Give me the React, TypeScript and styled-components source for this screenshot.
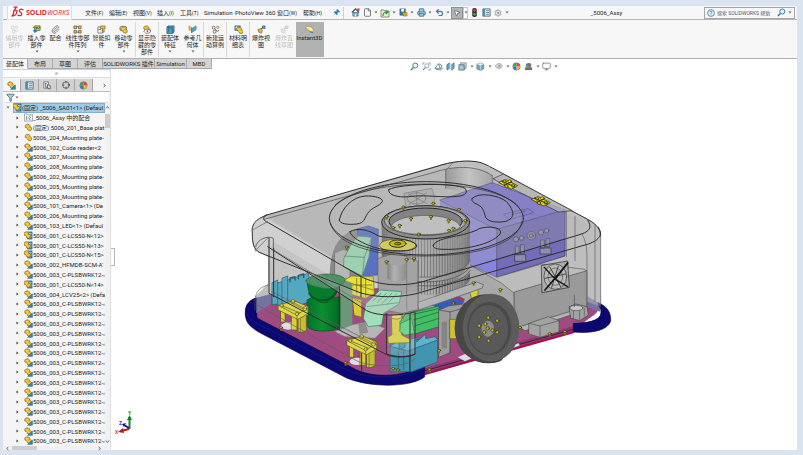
import React from "react";
import styled, { createGlobalStyle, css } from "styled-components";
import { Search, File, Printer, Undo2, MousePointer2, Settings, Filter, Crosshair, Pin, Eye, Monitor, Paperclip } from "lucide-react";

const Global = createGlobalStyle`
  * { box-sizing: border-box; }
  html, body { margin: 0; padding: 0; }
  body { background: #dae4f0; }
  body, button, input {
    font-family: Roboto, "Noto Sans CJK SC", sans-serif;
    font-size: 6px;
    color: #1c1c1c;
  }
  button { border: 0; padding: 0; margin: 0; background: none; }
  svg { display: block; flex: none; }
`;

const Desktop = styled.div`
  height: 100vh;
  padding: 6px 6px 5px 3px;
  background: #dae4f0;
`;
const Window = styled.div`
  height: 100%;
  display: flex;
  flex-direction: column;
  background: #fff;
`;
const TitleBar = styled.header`
  height: 14px;
  flex: none;
  display: flex;
  align-items: center;
  background: #f7f7f7;
  border-bottom: 1px solid #b4b4b4;
`;
const Logo = styled.div`
  width: 65px;
  height: 14px;
  margin-left: 4px;
  display: flex;
  align-items: center;
  gap: 2px;
  padding-left: 3px;
  background: #fff;
  border: 1px solid #dcdcdc;
  border-top: 0;
  color: #d8262c;
  font: 700 7px/13px "Open Sans", sans-serif;
`;
const Thin = styled.span`
  font-weight: 400;
  font-style: italic;
`;
const Menu = styled.nav`
  display: flex;
  align-items: center;
  padding-left: 13px;
`;
const MenuItem = styled.button<{ $w: number }>`
  width: ${(p) => p.$w}px;
  text-align: left;
  white-space: nowrap;
  line-height: 12px;
  small { font-size: 5px; }
`;
const QuickBar = styled.div`
  height: 12px;
  display: flex;
  align-items: center;
  padding-left: 5px;
  border-left: 1px solid #cfcfcf;
`;
const Quick = styled.button<{ $active?: boolean; $w?: number }>`
  width: ${(p) => p.$w ?? 12}px;
  height: 12px;
  display: grid;
  place-items: center;
  ${(p) => p.$active && css`background: #b1b4b5; border: 1px solid #8e9192;`}
`;
const Drop = styled.button<{ $w?: number; $boxed?: boolean }>`
  width: ${(p) => p.$w ?? 6}px;
  height: 12px;
  display: grid;
  place-items: center;
  ${(p) => p.$boxed && css`border: 1px solid #c9c9c9; background: #fff;`}
`;
const DocTitle = styled.div`
  flex: 1;
  text-align: center;
`;
const SearchBox = styled.label`
  width: 91px;
  height: 12px;
  margin-right: 2px;
  display: flex;
  align-items: center;
  gap: 2px;
  padding: 0 2px;
  border: 1px solid #a4a6ac;
  background: #f7f7f7;
  input {
    flex: 1;
    min-width: 0;
    padding: 0;
    border: 0;
    outline: 0;
    background: none;
    font-size: 5px;
  }
  input::placeholder { color: #585858; opacity: 1; }
`;
const Ribbon = styled.div`
  height: 39px;
  flex: none;
  display: flex;
  padding: 2px 0 1px 1px;
  background: #f7f7f7;
  border-bottom: 1px solid #b0b0b0;
`;
const Tool = styled.button<{ $w: number; $active?: boolean; $off?: boolean; $sep?: boolean }>`
  width: ${(p) => p.$w}px;
  display: flex;
  flex-direction: column;
  align-items: center;
  padding-top: 3px;
  line-height: 7px;
  white-space: pre;
  border-right: 1px solid ${(p) => (p.$sep ? "#d8d8d8" : "transparent")};
  background: ${(p) => (p.$active ? "#afb2b1" : "transparent")};
  opacity: ${(p) => (p.$off ? 0.28 : 1)};
  ${(p) => p.$off && css`filter: grayscale(1);`}
  span + svg { margin-top: 2px; }
`;
const TabRow = styled.div`
  height: 10px;
  flex: none;
  display: flex;
`;
const Tab = styled.button<{ $w: number; $on?: boolean }>`
  width: ${(p) => p.$w}px;
  height: 10px;
  line-height: 8px;
  background: ${(p) => (p.$on ? "#f7f7f7" : "#d4d4d4")};
  border-right: 1px solid #a9a9a9;
  border-bottom: 1px solid ${(p) => (p.$on ? "#f7f7f7" : "#a9a9a9")};
  white-space: nowrap;
`;
const Hud = styled.div`
  flex: 1;
  height: 14px;
  display: flex;
  align-items: center;
  justify-content: center;
  padding-right: 42px;
`;
const Body = styled.div`
  flex: 1;
  min-height: 0;
  display: grid;
  grid-template-columns: 108px minmax(0, 1fr);
`;
const Panel = styled.aside`
  min-height: 0;
  display: flex;
  flex-direction: column;
  background: #f5f5f5;
  border-right: 1px solid #dedede;
`;
const Grip = styled.div`
  height: 9px;
  flex: none;
  display: grid;
  place-items: center;
  background: #fff;
  border-bottom: 1px solid #dcdcdc;
  border-top: 1px solid #c5d2da;
  &::after {
    content: "";
    width: 3px;
    height: 3px;
    border-radius: 50%;
    background: #c4c4c4;
  }
`;
const PanelTabs = styled.div`
  height: 14px;
  flex: none;
  display: flex;
  padding-top: 1px;
  border-bottom: 1px solid #bdbdbd;
`;
const PanelTab = styled.button<{ $on?: boolean }>`
  width: 18px;
  display: grid;
  place-items: center;
  background: ${(p) => (p.$on ? "#f5f5f5" : "#d2d2d2")};
  border-right: 1px solid #a5a5a5;
`;
const More = styled.button`
  margin-left: auto;
  width: 12px;
  display: grid;
  place-items: center;
`;
const FilterRow = styled.div`
  height: 11px;
  flex: none;
  display: flex;
  align-items: center;
  margin: 0 2px;
  padding-left: 1px;
  background: #fff;
  border-bottom: 1px solid #d8d8d8;
`;
const TreeArea = styled.div`
  flex: 1;
  min-height: 0;
  display: grid;
  grid-template-columns: minmax(0, 1fr) 5px;
`;
const Tree = styled.ul`
  margin: 0;
  padding: 0;
  list-style: none;
  display: flex;
  flex-direction: column;
  min-height: 0;
  min-width: 0;
`;
const Node = styled.li<{ $root?: boolean }>`
  flex: 1;
  min-height: 0;
  display: flex;
  align-items: center;
  padding-left: ${(p) => (p.$root ? 2 : 11)}px;
`;
const Twist = styled.button`
  width: 6px;
  display: grid;
  place-items: center;
`;
const Label = styled.button<{ $on?: boolean }>`
  flex: 1;
  min-width: 0;
  height: 100%;
  margin-left: ${(p) => (p.$on ? 2 : 4)}px;
  display: flex;
  align-items: center;
  white-space: pre;
  line-height: 9px;
  background: ${(p) => (p.$on ? "#9fcbe8" : "transparent")};
  box-shadow: ${(p) => (p.$on ? "inset 0 0 0 1px #7fb0d2" : "none")};
`;
const VScroll = styled.div`
  display: flex;
  flex-direction: column;
  align-items: center;
  background: #f1f1f1;
  padding: 2px 0;
  i { width: 5px; height: 14px; margin-top: 4px; background: #cdcdcd; }
  svg:last-child { margin-top: auto; }
`;
const HScroll = styled.div`
  height: 4px;
  flex: none;
  display: flex;
  align-items: center;
  padding: 0 8px 0 2px;
  background: #f1f1f1;
  i { width: 25px; height: 4px; margin-left: 2px; background: #cdcdcd; }
  svg:last-child { margin-left: auto; }
`;
const Viewport = styled.main`
  position: relative;
  min-width: 0;
  min-height: 0;
  > svg { width: 100%; height: 100%; }
`;
const Handle = styled.button`
  position: absolute;
  left: 0;
  top: 47%;
  width: 4px;
  height: 18px;
  background: #fff;
  border: 1px solid #b5b5b5;
  border-left: 0;
`;

const Caret = () => (
  <svg width="4" height="3" viewBox="0 0 4 3"><path d="M0.5 0.5h3L2 2.4z" fill="#666" /></svg>
);
const Chevron = ({ d }: { d: string }) => (
  <svg width="5" height="5" viewBox="0 0 5 5" fill="none" stroke="#555" strokeWidth="0.9"><path d={d} /></svg>
);
const UP = "M1 3.4L2.5 1.6L4 3.4";
const DOWN = "M1 1.6L2.5 3.4L4 1.6";
const LEFT = "M3.4 1L1.6 2.5L3.4 4";
const RIGHT = "M1.6 1L3.4 2.5L1.6 4";

type GlyphName =
  | "part" | "asm" | "rootAsm" | "mates" | "insert" | "pattern" | "bolt" | "move" | "hide" | "feature" | "ref"
  | "motion" | "bom" | "explode" | "instant" | "home" | "open" | "save" | "traffic" | "list" | "config" | "ball"
  | "section" | "cube" | "scene" | "clip" | "zoomarea" | "box";

const gold = "#e9b92c";
const teal = "#2f7fa6";
const GoldPart = ({ x = 0, y = 0 }: { x?: number; y?: number }) => (
  <g transform={`translate(${x} ${y})`}>
    <path d="M1 4.5L1 2L3.5 0.8L6 1.8L6 3.6L8 4.6L8 7L6 8.2L3.6 7L3.6 5.4Z" fill={gold} stroke="#8a6510" strokeWidth="0.8" />
    <path d="M1 2L3.4 3.2L6 1.8M3.4 3.2V5.4M3.6 5.4L6 6.2L8 4.6" stroke="#fbe48a" strokeWidth="0.6" fill="none" />
  </g>
);
const art: Record<GlyphName, React.ReactNode> = {
  part: <GoldPart x={0.5} y={0.5} />,
  asm: <><GoldPart /><path d="M4 9.300L9.300 4.500V9.300z" fill="#3c8ab0" stroke="#1f5874" strokeWidth="0.6" /></>,
  rootAsm: <><path d="M4 1h5v8H4z" fill="#3c8db4" stroke="#1f5975" strokeWidth="0.6" /><path d="M5.5 3h3M6.5 2v6M5.5 6h3" stroke="#bfe3f1" strokeWidth="0.7" /><GoldPart x={-1} /></>,
  mates: <><path d="M0.5 1h3l1 1h5v7h-9z" fill="#f0f3f5" stroke="#74858f" strokeWidth="0.7" /><path d="M3 3.5v4M5 5l2 3M6 3.5l1.5 2" stroke="#477e9d" strokeWidth="0.9" /></>,
  insert: <><path d="M3 1h6v5H3z" fill="#f4d261" stroke="#554a21" strokeWidth="0.8" /><path d="M1 3h4v2M5 2l2 2 2-2" fill="none" stroke="#26914b" strokeWidth="1.2" /><path d="M1 6l3-1 2 2-3 2z" fill={teal} /></>,
  pattern: <><path d="M1 1h3v3H1zM6 1h3v3H6zM1 6h3v3H1zM6 6h3v3H6z" fill={gold} stroke="#574a28" strokeWidth="0.7" /><path d="M4 2h2M4 8h2" stroke={teal} /></>,
  bolt: <><path d="M1 2h5v7H1z" fill="#f1f1f1" stroke="#646464" strokeWidth="0.8" /><path d="M4 1h5v3H8v4H6V4H4z" fill={gold} stroke="#6b551f" strokeWidth="0.6" /><path d="M1.5 5h3" stroke="#7a7a7a" /></>,
  move: <><rect x="1" y="1.5" width="7.5" height="5" rx="2" fill="none" stroke="#555" strokeWidth="0.8" /><GoldPart x={1} y={1} /></>,
  hide: <><GoldPart x={0} /><path d="M1 7c2-3 5-3 8 0-3 3-6 3-8 0z" fill="#fff" stroke="#444" strokeWidth="0.7" /><circle cx="5" cy="7" r="1.1" fill={teal} /></>,
  feature: <path d="M1 2l2-1h6v7l-2 1.5H1zM3 3h4v6M3 1v7" fill="#4e9dc1" stroke="#245c78" strokeWidth="0.8" />,
  ref: <><path d="M1 1l3 2v4L1 5z" fill="#f0b85f" stroke="#986326" strokeWidth="0.5" /><path d="M4 4l5-3v4L5 8z" fill="#5aa9cc" stroke="#286787" strokeWidth="0.6" /><path d="M4 3v6" stroke={teal} /></>,
  motion: <g fill="none" stroke="#666" strokeWidth="1"><circle cx="3" cy="3" r="1.6" /><circle cx="7.5" cy="2.5" r="1.3" stroke="#9e7d47" /><circle cx="4" cy="7.5" r="1.6" /><path d="M4 4l3 3 2-1" /></g>,
  bom: <><path d="M1 1h6v5H1z" fill="#4f99bc" stroke="#245a75" strokeWidth="0.7" /><path d="M1 3h6M3 1v5" stroke="#fff" strokeWidth="0.6" /><GoldPart x={2} y={1.5} /></>,
  explode: <><path d="M1 5l3-1 2 2-1 3-3-1z" fill={gold} stroke="#715a1e" strokeWidth="0.7" /><path d="M6 1h3v3H6z" fill="#4f9cc0" stroke="#24556f" strokeWidth="0.6" /><path d="M4.5 4.5l2-2" stroke="#333" strokeWidth="0.8" /></>,
  instant: <><path d="M0.5 3l5-2 4 4-3 3z" fill="#f5d451" stroke="#9d842c" strokeWidth="0.6" /><path d="M1 2.5L8 7l1-2-5-3z" fill="#f8f3d5" /><path d="M5 7.5l4 1" stroke={teal} /></>,
  home: <><path d="M1 5l4-4 4 4" fill="none" stroke="#3b4f5b" strokeWidth="1.3" /><path d="M2 5h6v4H2z" fill="#71a6bd" stroke="#385e70" strokeWidth="0.6" /><path d="M4.300 6.500h1.500V9H4.300z" fill="#fff" /><path d="M7 0.5h2.500v2.500H7z" fill="#ce3239" /></>,
  open: <><path d="M1 2h3l1 1h4v6H1z" fill="#e9edd5" stroke="#777956" strokeWidth="0.8" /><path d="M3 8c0-3 1-4 4-4M5.5 2.5L8 4 5.5 6" fill="none" stroke="#2d9342" strokeWidth="1.2" /></>,
  save: <><path d="M1 1h6v7H1z" fill={teal} stroke="#36444c" strokeWidth="0.6" /><path d="M2.5 1h3v3h-3z" fill="#fff" /><path d="M4 5h5v4H5z" fill="#e2a733" stroke="#7d5b1a" strokeWidth="0.5" /></>,
  traffic: <><rect x="2.5" y="0" width="5" height="10" rx="2" fill="#333" /><circle cx="5" cy="2.6" r="1.5" fill="#e33b35" /><circle cx="5" cy="7" r="1.5" fill="#43af48" /></>,
  list: <><path d="M1 1h8v8H1z" fill="#edf4f7" stroke="#385d70" strokeWidth="0.9" /><path d="M1 1h2.5v8H1z" fill="#4b91b2" /><path d="M4.5 3h3.5M4.5 5h3.5M4.5 7h3.5" stroke="#486373" strokeWidth="0.8" /></>,
  config: <><path d="M1 1h5v7H1z" fill="#fff" stroke="#5e5e5e" strokeWidth="0.8" /><path d="M2 3h2M3 3v4h2M5 4l3 1v4l-3-1z" fill="#ddd" stroke="#4e5960" strokeWidth="0.9" /></>,
  ball: <><path d="M5 5V0.8A4.2 4.2 0 0 1 9.2 5z" fill="#e94235" /><path d="M5 5h4.2A4.2 4.2 0 0 1 5 9.2z" fill="#eeb927" /><path d="M5 5v4.2A4.2 4.2 0 0 1 .8 5z" fill="#3b73c9" /><path d="M5 5H.8A4.2 4.2 0 0 1 5 .8z" fill="#42a34d" /><circle cx="5" cy="5" r="4.2" fill="none" stroke="#77736a" strokeWidth="0.5" /></>,
  section: <><path d="M1 3l3-2v6L1 9zM6 3l3-2v6L6 9z" fill="#68a5bf" stroke="#345f72" strokeWidth="0.7" /><path d="M4 2h2v6H4z" fill="#cfe0e6" /></>,
  cube: <><path d="M1 2.5L4.5 1L8.5 2.5V7.5L5 9.3L1 7.7z" fill="#6fabc4" stroke="#526c77" strokeWidth="0.7" /><path d="M1 2.5L5 4L8.5 2.5L4.5 1z" fill="#e8f3f7" /><path d="M5 4v5" stroke="#d8edf4" strokeWidth="0.7" /></>,
  scene: <><path d="M1 6h8v3H1z" fill="#7a6d55" /><circle cx="5" cy="4" r="3" fill="#3f86c2" /><path d="M5 4V1a3 3 0 0 1 3 3z" fill="#df493c" /><path d="M5 4H2a3 3 0 0 0 3 3z" fill="#5fae50" /></>,
  clip: <g fill="none" stroke="#517789" strokeWidth="0.9"><path d="M1 7l4-5 2 5zM5 2l3 1 1 5-2-1" /><path d="M2 8l6 1" /></g>,
  zoomarea: <g fill="none" stroke="#6c8591" strokeWidth="0.8"><path d="M1 3V1h2M7 1h2v2M9 7v2H7" /><circle cx="5.4" cy="4.2" r="2.3" /><path d="M4 6L1 9" strokeWidth="1.3" /></g>,
  box: <><path d="M1 3h6v6H1z" fill="#a5cad8" stroke="#426271" strokeWidth="0.8" /><path d="M3 1h6v6H7V3H3z" fill="#dceaf0" stroke="#426271" strokeWidth="0.7" /></>,
};
const Glyph = ({ n, s = 9 }: { n: GlyphName; s?: number }) => (
  <svg width={s} height={s} viewBox="0 0 10 10">{art[n]}</svg>
);
const Lens = ({ color }: { color: string }) => (
  <svg width="9" height="9" viewBox="0 0 9 9" fill="none" stroke={color}>
    <circle cx="5.300" cy="3.500" r="2.500" fill="#eaf4f8" /><path d="M3.400 5.400L0.900 8" strokeWidth="1.500" />
  </svg>
);

const menus: [string, string, number][] = [
  ["文件", "(F)", 24], ["编辑", "(E)", 24], ["视图", "(V)", 24], ["插入", "(I)", 23], ["工具", "(T)", 24],
  ["Simulation", "", 31], ["PhotoView 360", "", 42], ["窗口", "(W)", 26], ["帮助", "(H)", 26],
];
interface ToolDef { t: string; n: GlyphName | "mate"; w: number; drop?: boolean; sep?: boolean; off?: boolean; active?: boolean }
const tools: ToolDef[] = [
  { t: "编辑零\n部件", n: "motion", w: 22, off: true },
  { t: "插入零\n部件", n: "insert", w: 22, drop: true },
  { t: "配合", n: "mate", w: 16 },
  { t: "线性零部\n件阵列", n: "pattern", w: 28, drop: true },
  { t: "智能扣\n件", n: "bolt", w: 20 },
  { t: "移动零\n部件", n: "move", w: 24, drop: true, sep: true },
  { t: "显示隐\n藏的零\n部件", n: "hide", w: 23, sep: true },
  { t: "装配体\n特征", n: "feature", w: 23, drop: true },
  { t: "参考几\n何体", n: "ref", w: 22, drop: true, sep: true },
  { t: "新建运\n动算例", n: "motion", w: 23, sep: true },
  { t: "材料明\n细表", n: "bom", w: 23, sep: true },
  { t: "爆炸视\n图", n: "explode", w: 23 },
  { t: "爆炸直\n线草图", n: "explode", w: 23, off: true },
  { t: "Instant3D", n: "instant", w: 28, active: true },
];
const tabs: [string, number][] = [["装配体", 25], ["布局", 25], ["草图", 25], ["评估", 25], ["SOLIDWORKS 插件", 52], ["Simulation", 32], ["MBD", 25]];

const repeated = Array.from({ length: 15 }, () => ["5006_003_C-PLSBWRK12-‹", "asm"] as [string, GlyphName]);
const nodes: [string, GlyphName][] = [
  ["_5006_Assy 中的配合", "mates"],
  ["(固定) 5006_201_Base plat", "part"],
  ["5006_204_Mounting plate-", "part"],
  ["5006_102_Code reader<2", "asm"],
  ["5006_207_Mounting plate-", "asm"],
  ["5006_208_Mounting plate-", "asm"],
  ["5006_202_Mounting plate-", "asm"],
  ["5006_205_Mounting plate-", "asm"],
  ["5006_203_Mounting plate-", "asm"],
  ["5006_101_Camera<1> (De", "asm"],
  ["5006_206_Mounting plate-", "asm"],
  ["5006_103_LED<1> (Defaul", "asm"],
  ["5006_001_C-LCS50-N<12>", "rootAsm"],
  ["5006_001_C-LCS50-N<13>", "rootAsm"],
  ["5006_001_C-LCS50-N<15>", "rootAsm"],
  ["5006_002_HFMDB-SCM-A'", "asm"],
  ["5006_003_C-PLSBWRK12-‹", "asm"],
  ["5006_001_C-LCS50-N<14>", "rootAsm"],
  ["5006_004_LCV25<2> (Defa", "asm"],
  ...repeated,
];

const Screw = ({ x, y }: { x: number; y: number }) => (
  <g transform={`translate(${x} ${y})`}>
    <ellipse cy="-2" rx="5" ry="3" fill="#d3cb35" stroke="#2b2905" strokeWidth="2" />
    <path d="M-3 1h6v6h-6z" fill="#77711b" />
  </g>
);
const Hinge = ({ x, y }: { x: number; y: number }) => (
  <g transform={`translate(${x} ${y})`} stroke="#2c2a00" strokeWidth="2">
    <path d="M-28 -6L-8 -14L28 4L10 14z" fill="#e7df10" />
    <circle cx="-12" cy="-8" r="5" fill="#f5ef1a" /><circle cx="4" cy="-9" r="5" fill="#f5ef1a" />
    <circle cx="-6" cy="5" r="5" fill="#c9c10c" /><circle cx="14" cy="4" r="5" fill="#f5ef1a" />
    <path d="M-20 -10L20 8M-12 2L10 -8" fill="none" strokeWidth="3" />
  </g>
);
const Bracket = ({ x, y }: { x: number; y: number }) => (
  <g transform={`translate(${x} ${y})`} stroke="#5f5b16" strokeWidth="2" strokeLinejoin="round">
    <ellipse cx="30" cy="74" rx="22" ry="11" fill="#dedede" stroke="none" />
    <path d="M8 16h12v46h-12zM40 40h16v46h-16zM60 46h18v46h-18z" fill="#d9d136" />
    <path d="M0 12L46 -2L90 16L88 42L58 54L0 26z" fill="#ded650" />
    <path d="M0 12L56 42L90 16M56 42v12M12 14L64 34M36 4L80 26" fill="none" />
    <path d="M84 40v48l-18 6V52z" fill="#c5bd36" />
    <circle cx="10" cy="12" r="5" fill="#d6cd44" /><circle cx="44" cy="0" r="6" fill="#d6cd44" />
    <circle cx="80" cy="22" r="6" fill="#ede660" /><circle cx="56" cy="38" r="5" fill="#d6cd44" />
  </g>
);

const ribs = Array.from({ length: 46 }, (_, i) => {
  const a = (i / 45) * Math.PI;
  return { x: 573 - Math.cos(a) * 130, dy: Math.sin(a) * 48 };
});
const wheelBolts = [[760, 503], [787, 512], [787, 547], [761, 572], [733, 561], [733, 527], [748, 547], [773, 541], [751, 522], [758, 535]];
const ringScrews = [[505, 173], [595, 162], [455, 202], [475, 235], [551, 254], [528, 207], [588, 202], [494, 228], [672, 180], [641, 213], [691, 214], [642, 243], [655, 237]];
const bodyScrews = [[335, 293], [455, 337], [515, 330], [537, 328], [584, 660], [612, 603], [990, 547], [855, 535], [796, 421], [655, 461], [716, 400], [332, 640], [475, 658], [944, 553], [489, 662], [138, 535]];

const Model = () => (
  <svg x="235" y="150" width="390" height="245" viewBox="0 0 1170 735" strokeLinejoin="round" strokeLinecap="round">
    <defs>
      <linearGradient id="corner" x1="0" x2="1"><stop offset="0" stopColor="#8a8a8a" /><stop offset="0.5" stopColor="#d2d2d2" /><stop offset="1" stopColor="#9d9d9d" /></linearGradient>
      <linearGradient id="green" x1="0" x2="1"><stop offset="0" stopColor="#00722c" /><stop offset="0.45" stopColor="#0a9030" /><stop offset="1" stopColor="#006a22" /></linearGradient>
      <linearGradient id="barrel" x1="0" x2="1"><stop offset="0" stopColor="#777" /><stop offset="0.35" stopColor="#b6b6b6" /><stop offset="1" stopColor="#858585" /></linearGradient>
    </defs>
    {/* bumper rear arc and shell silhouette */}
    <path d="M62 444C35 455 30 470 31 496L70 506L100 420z" fill="#0b0872" />
    <path d="M95 195L630 40C660 32 700 28 738 38C770 50 790 65 1058 208C1088 224 1097 240 1097 260V475L1060 500L600 640L540 620L455 612L60 440L100 400L100 320C60 305 50 280 52 240C56 215 75 203 95 195z" fill="#bebebe" />
    <path d="M52 240C56 215 75 203 95 205L380 378C430 402 500 408 600 380V420C520 445 450 445 375 428L60 303C52 285 50 265 52 240z" fill="#d0d0d0" />
    <path d="M116 275L375 430L455 470V612L100 430V300z" fill="#c4c4c4" />
    <path d="M632 62C690 40 730 42 772 76V100L700 130L632 115z" fill="url(#corner)" opacity="0.8" />
    {/* floor and bumper */}
    <path d="M68 458L108 435L320 420L700 400L1040 442C1090 458 1105 480 1070 500L1015 540L570 672L460 690L370 670L66 505z" fill="#9f4b82" />
    <path d="M62 444L108 432V462L64 490z" fill="#76729f" />
    <path d="M1056 438L1100 465L1094 485L1056 470z" fill="#76729f" />
    <path d="M570 655L1015 528L1015 545L570 675z" fill="#8a3a6d" />
    <path d="M572 671L1015 547" stroke="#a2104f" strokeWidth="6" />
    <path d="M570 662L1015 538" stroke="#29111f" strokeWidth="2" />
    <path d="M62 444C35 455 30 470 31 496C34 522 48 532 78 550L335 684C390 707 470 710 520 700C545 694 560 688 569 680V645C545 658 510 672 470 675C430 678 395 673 365 660L70 506C60 499 58 490 62 480z" fill="#0b0872" stroke="#03023b" strokeWidth="2" />
    <path d="M31 480C34 500 48 512 78 527L345 664C400 686 500 688 567 654" fill="none" stroke="#1d1b90" strokeWidth="2" />
    <path d="M1090 458C1118 470 1128 488 1127 512C1122 535 1085 552 1015 546V520C1055 520 1090 512 1096 496C1100 484 1098 474 1090 466z" fill="#0d086f" stroke="#03023b" strokeWidth="2" />

    {/* controller box */}
    <path d="M615 150L772 98L990 180L785 238z" fill="#7b74d2" />
    <path d="M785 238L990 180V318L785 382z" fill="#726db6" />
    <path d="M615 150L785 238V382L615 305z" fill="#8784e0" />
    <path d="M615 150L772 98L990 180L785 238zM785 238V382L990 318V180" fill="none" stroke="#37346b" strokeWidth="2" />
    <path d="M806 192L880 176L896 188L824 208zM830 194L872 184" fill="none" stroke="#56509b" strokeWidth="3" />
    <g fill="#8f8daf" stroke="#383650" strokeWidth="2">
      <circle cx="843" cy="268" r="8" /><circle cx="860" cy="264" r="7" /><circle cx="889" cy="257" r="13" /><circle cx="889" cy="257" r="6" />
      <circle cx="918" cy="247" r="8" /><circle cx="935" cy="242" r="7" />
      <path d="M842 288h10v26h-10zM858 284h10v26h-10zM840 314h32v20h-32zM918 270h10v24h-10zM934 266h10v24h-10zM916 294h32v18h-32z" />
    </g>

    {/* chassis plates and battery block */}
    <path d="M540 400L705 345L838 415L840 540L700 470L600 480L500 500z" fill="#a9a9a9" stroke="#555" strokeWidth="2" />
    <path d="M705 345L785 382L920 342L1050 358L1056 375L838 430L800 400z" fill="#bcbcbc" stroke="#5d5d5d" strokeWidth="2" />
    <path d="M838 426L1056 362V480L838 545z" fill="#9a9a9a" stroke="#4f4f4f" strokeWidth="2" />
    <path d="M855 530L1010 483V494L870 542z" fill="#b4b4b4" stroke="#4d4d4d" strokeWidth="2" />
    <path d="M630 440L662 432L690 448L680 468L600 460z" fill="#933f6c" />
    <path d="M590 466L655 446L690 456L620 480z" fill="#345bc4" />
    <path d="M703 415h26v40l-14 10z" fill="#d9d132" stroke="#66611a" strokeWidth="2" />

    {/* ribbed barrel */}
    <path d="M440 215V385C470 450 680 450 705 380V215z" fill="url(#barrel)" />
    <path d="M440 300C470 450 680 450 705 320V395C680 450 500 450 440 400z" fill="#a3a3a3" />
    {ribs.map((r) => <path key={r.x} d={`M${r.x} ${217 + r.dy}V${332 + r.dy}M${r.x} ${370 + r.dy / 2}V${385 + r.dy}`} stroke="#555" strokeWidth="2" />)}
    <path d="M440 335C480 398 670 398 705 332M445 352C490 412 670 410 705 350M445 364C490 424 670 422 705 362" fill="none" stroke="#4a4a4a" strokeWidth="2" />
    <path d="M535 462L725 396L745 404L742 414L640 450L545 482z" fill="#b4b4b4" stroke="#555" strokeWidth="2" />

    {/* interior left */}
    <path d="M284 385C284 310 300 255 370 234L380 385z" fill="#777" opacity="0.8" />
    <path d="M300 308L325 298L345 306V385H300z" fill="#b7b7b7" stroke="#6d6d6d" strokeWidth="2" />
    <path d="M368 236L400 228L430 238L428 375L385 378L372 300z" fill="#3f5fca" stroke="#23398b" strokeWidth="2" />
    <path d="M327 325L350 280L370 258L410 262L402 320L382 378L327 350z" fill="#9be0b8" stroke="#42735a" strokeWidth="2" />
    <path d="M327 318L388 322L410 262M388 322L382 378" fill="none" stroke="#42735a" strokeWidth="2" />
    <path d="M430 325L485 308L550 335V480L500 490L450 480L430 430z" fill="#a2a2a2" stroke="#555" strokeWidth="2" />
    <path d="M457 335C470 350 505 350 515 335V385C505 398 470 398 457 385z" fill="url(#barrel)" />
    <path d="M515 340V480M548 335V470" stroke="#666" strokeWidth="2" />
    <path d="M332 388L350 378L415 380L418 432L390 445L335 430z" fill="#e8df3a" stroke="#6b651b" strokeWidth="2" />
    <path d="M350 405H410M365 385V430M392 385V440M332 395L415 420" stroke="#6b651b" strokeWidth="2" />
    <path d="M352 440L380 450V502L358 496z" fill="#d5cc2f" stroke="#6b651b" strokeWidth="2" />
    <path d="M300 545L330 528L400 515L450 535L420 565L330 560z" fill="#b6b6b6" stroke="#777" strokeWidth="2" />
    <path d="M370 522L392 518L400 548L374 552z" fill="#8d8d8d" />
    <path d="M415 440L435 420L500 425L492 462L446 490L440 525L400 530L385 505L392 462z" fill="#9fe0ba" stroke="#477a5e" strokeWidth="2" />
    <path d="M414 452L438 430M428 456L454 430M442 460L470 430M456 464L484 432M395 470L490 458" stroke="#477a5e" strokeWidth="2" />

    {/* light-blue terminals */}
    <g fill="#54a7c0" stroke="#245c70" strokeWidth="2">
      <path d="M125 400L220 370L235 450L165 478L120 462z" />
      <path d="M112 398L128 390V462L112 464zM142 384L158 378V466L142 470z" />
      <path d="M165 395V384L180 380V390M190 386V376L206 372V382" fill="none" strokeWidth="4" />
      <path d="M466 585L520 570L608 566V636L530 665L466 665z" fill="#4195b0" />
      <path d="M466 588L492 570V600L510 592V572L545 562V576L572 552V566L600 560L608 570L520 602z" fill="#5fb4cd" />
      <path d="M490 605V660M506 600V658M524 602V662" fill="none" />
    </g>

    {/* green beacon */}
    <path d="M300 378L352 400V525L315 540V440z" fill="#6c957a" />
    <path d="M217 392C217 440 240 460 262 460C290 460 310 430 312 395z" fill="#047a2b" stroke="#064d1c" strokeWidth="2" />
    <path d="M217 450C230 440 240 440 245 452C262 462 280 460 290 445L315 440V530C300 548 230 548 217 530z" fill="url(#green)" stroke="#064d1c" strokeWidth="2" />
    <path d="M222 430C240 458 285 458 304 426" fill="none" stroke="#03501c" strokeWidth="5" />
    <path d="M212 392C225 370 300 366 325 382C340 395 310 418 280 416C250 414 215 405 212 392z" fill="#4d9064" stroke="#2c6b41" strokeWidth="2" />

    <Bracket x={130} y={454} />
    <Bracket x={336} y={560} />
    <path d="M470 505L500 495V555L525 568V578L460 580L458 562L470 555z" fill="#e0d838" stroke="#645f18" strokeWidth="2" />
    <ellipse cx="485" cy="500" rx="16" ry="7" fill="#eee65b" stroke="#645f18" strokeWidth="2" />

    {/* green connector block */}
    <path d="M495 515L512 492L612 468V530L530 555L498 545z" fill="#43bd66" stroke="#176430" strokeWidth="2" />
    <path d="M497 520L530 505L538 550L510 556L495 545z" fill="#55df7c" stroke="#176430" strokeWidth="2" />
    <path d="M535 510L612 486M538 528L612 505M530 494L610 476" stroke="#176430" strokeWidth="2" />

    {/* drive wheel */}
    <path d="M612 480L640 468L700 460V500L650 515L645 608L612 622z" fill="#9d9d9d" stroke="#484848" strokeWidth="2" />
    <path d="M612 480L645 486L700 470M645 486V608" fill="none" stroke="#484848" strokeWidth="2" />
    <path d="M620 515h16v80h-16z" fill="#858585" />
    <path d="M645 508h20v58h-20z" fill="#c9c236" stroke="#686318" strokeWidth="2" />
    <ellipse cx="760" cy="623" rx="44" ry="17" fill="#3f3f3f" />
    <path d="M668 622L690 612L720 620L690 634z" fill="#ddd" />
    <path d="M828 588L850 580L855 586L835 594z" fill="#ddd" />
    <ellipse cx="750" cy="535" rx="91" ry="102" fill="#474747" />
    <ellipse cx="768" cy="533" rx="85" ry="102" fill="#5c5c5c" />
    <ellipse cx="763" cy="536" rx="66" ry="80" fill="#4a4a4a" />
    <ellipse cx="760" cy="538" rx="59" ry="73" fill="#595959" />
    <ellipse cx="758" cy="536" rx="19" ry="24" fill="#8c8c8c" />
    {wheelBolts.map(([x, y]) => <circle key={`${x}-${y}`} cx={x} cy={y} r="5" fill="#bdb936" stroke="#36340b" strokeWidth="2" />)}

    {/* small box and leveller */}
    <path d="M882 520L940 500L972 512V545L915 562L882 552z" fill="#a2a2a2" stroke="#505050" strokeWidth="2" />
    <path d="M882 520L915 528L972 512M915 528V562" fill="none" stroke="#505050" strokeWidth="2" />
    <path d="M1003 470L1022 462L1056 470L1060 495L1035 512L1008 505z" fill="#a2a2a2" stroke="#444" strokeWidth="2" />
    <ellipse cx="1024" cy="474" rx="20" ry="8" fill="#c7c7c7" stroke="#444" strokeWidth="2" />
    <path d="M1018 435V470M1015 484V506M1034 484V510M1048 474V498" stroke="#555" strokeWidth="2" fill="none" />

    {/* side fan */}
    <path d="M920 346L998 333L1003 412L922 428z" fill="#aaa" stroke="#262626" strokeWidth="2" />
    <ellipse cx="961" cy="380" rx="34" ry="38" fill="#bababa" stroke="#333" strokeWidth="2" />
    <ellipse cx="961" cy="380" rx="22" ry="26" fill="none" stroke="#555" strokeWidth="2" />
    <path d="M945 352L977 410M930 385L992 372M950 412L970 348" stroke="#444" strokeWidth="3" />
    <path d="M928 352L961 388L998 338M961 388L998 410" fill="none" stroke="#151515" strokeWidth="4" />
    <path d="M930 420L998 340" stroke="#151515" strokeWidth="5" />

    {/* translucent lid */}
    <path d="M95 195L630 60L700 48L770 82L990 190L1060 225C1050 260 900 290 785 325L600 380C500 408 430 404 380 378z" fill="#a8a8a8" opacity="0.26" />
    <ellipse cx="574" cy="207" rx="291" ry="110" fill="#b8b8b8" opacity="0.2" />
    <path d="M100 300L375 430C430 445 500 440 600 410V440C520 500 450 500 410 485L115 310z" fill="#c0c0c0" opacity="0.3" />
    <path d="M455 490L540 485V612C520 622 480 622 455 612z" fill="#bbb" opacity="0.25" />
    <path d="M995 200L1097 250V470L1056 455V340L995 325z" fill="#bfbfbf" opacity="0.45" />

    {/* exhaust grille, mounting disc and central ring */}
    <g stroke="#7a7a7a" fill="#b0b0b0" strokeWidth="2">
      <path d="M508 130L590 115L600 145L593 168L515 175z" /><ellipse cx="545" cy="145" rx="28" ry="17" /><path d="M520 132L575 160M575 128L522 163M545 125V165" />
    </g>
    <ellipse cx="572" cy="217" rx="132" ry="50" fill="#8d8d8d" stroke="#272727" strokeWidth="3" />
    <ellipse cx="572" cy="212" rx="124" ry="44" fill="#a9a9a9" stroke="#333" strokeWidth="2" />
    <ellipse cx="572" cy="214" rx="110" ry="40" fill="#838383" stroke="#262626" strokeWidth="3" />
    <path d="M468 230C480 185 660 185 676 230C650 262 490 262 468 230z" fill="#bfbfbf" stroke="#555" strokeWidth="2" />
    <ellipse cx="488" cy="286" rx="55" ry="19" fill="#d0c967" stroke="#524e1c" strokeWidth="2" />
    <ellipse cx="488" cy="281" rx="25" ry="11" fill="#c3bb28" stroke="#37340a" strokeWidth="3" />
    <ellipse cx="488" cy="281" rx="10" ry="4" fill="#8b8630" stroke="#37340a" strokeWidth="2" />

    {/* shell edges */}
    <g fill="none" stroke="#2e2e2e" strokeWidth="3">
      <path d="M95 195L600 51C650 34 700 28 738 38C770 50 790 65 1058 208C1088 224 1097 240 1097 258" />
      <path d="M88 208L600 66C650 50 720 42 770 76" stroke="#6f6f6f" />
      <path d="M95 195C60 208 48 225 52 250C52 275 54 298 75 308L375 428C430 445 490 442 540 432L1060 282C1095 270 1104 252 1090 232" />
      <path d="M95 195C78 205 86 212 100 218L375 378C430 408 500 410 560 396L1040 252C1068 242 1070 228 1058 210" />
      <path d="M62 290C65 270 95 255 115 265V295" stroke="#666" />
      <path d="M98 290L395 482C430 500 500 498 540 485V612C520 622 480 622 455 612V490" />
      <path d="M116 300L390 465" stroke="#666" strokeWidth="2" />
      <path d="M102 265V430L455 614C480 624 520 624 540 612M116 295V440M313 410V540M378 380V440M380 610V665M525 490V665" />
      <path d="M60 450C62 425 75 410 100 405M60 450V480M66 465L370 635C430 655 530 650 540 625M110 425L455 600" stroke="#5c5c5c" strokeWidth="2" />
      <path d="M52 240L98 215M60 303L100 262M632 115V62M632 62L652 40M772 76V100M994 180V320M1020 200V332M1097 258V465M1080 225V455M1040 250C1055 275 1056 300 1056 340V470" stroke="#5a5a5a" strokeWidth="2" />
      <path d="M775 86L805 72L1012 182L972 186z" fill="#b5b7b0" fillOpacity="0.8" stroke="#333" strokeWidth="2" />
      <ellipse cx="574" cy="205" rx="291" ry="110" />
      <path d="M287 222C310 295 450 320 574 318C720 317 850 285 860 215M300 165C350 120 480 102 574 102C700 102 820 130 850 170" strokeWidth="2" />
      <path d="M313 210C320 175 350 142 390 138C420 137 445 144 442 155C435 168 410 172 398 190C386 208 390 218 365 222C340 225 312 222 313 210z" />
      <path d="M462 118C500 100 660 98 690 115C700 128 690 135 675 138C620 146 580 132 520 140C480 144 455 130 462 118z" />
      <path d="M712 145C730 125 790 135 815 155C840 185 840 205 812 214C785 219 760 216 752 202C745 180 745 170 720 160C712 155 708 151 712 145z" />
      <path d="M595 285C610 258 690 262 735 235C775 225 805 237 795 252C770 285 680 300 630 298C605 298 592 295 595 285z" />
      <path d="M345 245C365 232 400 238 430 258C460 265 530 265 545 285C548 303 500 305 455 300C410 295 345 265 345 245z" />
    </g>

    {ringScrews.map(([x, y]) => <Screw key={`${x}-${y}`} x={x} y={y} />)}
    {bodyScrews.map(([x, y]) => <Screw key={`${x}-${y}`} x={x} y={y} />)}
    <Hinge x={820} y={103} />
    <Hinge x={918} y={154} />
  </svg>
);

const Scene = () => (
  <svg viewBox="111 69 686 381" role="img" aria-label="5006 Assy 3D">
    <Model />
    <g fontFamily="Roboto, sans-serif" fontSize="5" fontWeight="700">
      <path d="M129.500 429V417" stroke="#168322" strokeWidth="2" /><path d="M127 420L129.500 415L132 420z" fill="#168322" />
      <path d="M129 429L121 431" stroke="#b71c1c" strokeWidth="2" /><path d="M123 428L118 432L124 433z" fill="#b71c1c" />
      <path d="M129 428L124 425" stroke="#171797" strokeWidth="2" /><path d="M126 423L122 424L124 427z" fill="#171797" />
      <text x="128" y="415" fill="#218b2d">Y</text><text x="115" y="434" fill="#e33">X</text><text x="119" y="425" fill="#33d">Z</text>
    </g>
  </svg>
);

export default function App() {
  return (
    <>
      <Global />
      <Desktop>
        <Window>
          <TitleBar>
            <Logo>
              <svg width="13" height="12" viewBox="0 0 13 12" fill="none" stroke="#d8262c" strokeWidth="1.300" strokeLinecap="round">
                <path d="M3 1.200H5.500L3.700 3.300M1 10C3.500 9.800 6 8 6 5.600C6 4.200 4.500 4.200 3 4.600L2 9.500M12 3.800C10 2.600 8 3.400 8.300 5C8.600 6.400 11 6.500 10.700 8.300C10.300 9.900 8.300 10 7 9.300" />
              </svg>
              <span>SOLID<Thin>WORKS</Thin></span>
            </Logo>
            <Menu>
              {menus.map(([t, k, w]) => <MenuItem key={t} $w={w}>{t}<small>{k}</small></MenuItem>)}
            </Menu>
            <Quick $w={14} aria-label="固定菜单"><Pin size={7} color="#2383b4" fill="#2383b4" transform="rotate(45)" /></Quick>
            <QuickBar>
              <Quick aria-label="主页"><Glyph n="home" s={9} /></Quick>
              <Quick aria-label="新建"><File size={9} color="#555" /></Quick><Drop aria-label="新建选项"><Caret /></Drop>
              <Quick aria-label="打开"><Glyph n="open" s={10} /></Quick><Drop aria-label="打开选项"><Caret /></Drop>
              <Quick aria-label="保存"><Glyph n="save" s={9} /></Quick><Drop aria-label="保存选项"><Caret /></Drop>
              <Quick aria-label="打印"><Printer size={9} color="#2c6b8b" fill="#9cc6d8" /></Quick><Drop aria-label="打印选项"><Caret /></Drop>
              <Quick aria-label="撤消"><Undo2 size={9} color="#317fa6" strokeWidth={3} /></Quick><Drop aria-label="撤消选项"><Caret /></Drop>
              <Quick $active aria-label="选择"><MousePointer2 size={8} color="#555" fill="#fff" /></Quick><Drop $w={5} $boxed aria-label="选择选项"><Caret /></Drop>
              <Quick aria-label="重建模型"><Glyph n="traffic" s={9} /></Quick>
              <Quick aria-label="文件属性"><Glyph n="list" s={9} /></Quick>
              <Quick aria-label="选项"><Settings size={8} color="#777" /></Quick><Drop $w={5} aria-label="更多选项"><Caret /></Drop>
            </QuickBar>
            <DocTitle>_5006_Assy</DocTitle>
            <SearchBox>
              <svg width="8" height="8" viewBox="0 0 8 8"><circle cx="4" cy="4" r="3.400" fill="#e7f1f6" stroke="#3d7c9c" strokeWidth="0.800" /><path d="M3 3C3 1.800 5 1.800 5 3C5 3.800 4 3.700 4 4.700M4 5.500V6.200" fill="none" stroke="#3d7c9c" strokeWidth="0.800" /></svg>
              <input aria-label="搜索 SOLIDWORKS 帮助" placeholder="搜索 SOLIDWORKS 帮助" />
              <Lens color="#3d7c9c" />
              <Caret />
            </SearchBox>
          </TitleBar>
          <Ribbon>
            {tools.map((t) => (
              <Tool key={t.t} $w={t.w} $sep={t.sep} $off={t.off} $active={t.active} disabled={t.off}>
                {t.n === "mate" ? <Paperclip size={9} color="#5f6468" /> : <Glyph n={t.n} s={9} />}
                <span>{t.t}</span>
                {t.drop && <Caret />}
              </Tool>
            ))}
          </Ribbon>
          <TabRow>
            {tabs.map(([t, w], i) => <Tab key={t} $w={w} $on={i === 0}>{t}</Tab>)}
            <Hud>
              <Quick aria-label="整屏显示全图"><Lens color="#5b7e8e" /></Quick>
              <Quick aria-label="局部放大"><Glyph n="zoomarea" s={9} /></Quick>
              <Quick aria-label="上一视图"><Glyph n="clip" s={9} /></Quick>
              <Quick aria-label="剖面视图"><Glyph n="section" s={9} /></Quick>
              <Quick aria-label="视图定向"><Glyph n="box" s={9} /></Quick><Drop aria-label="视图定向选项"><Caret /></Drop>
              <Quick aria-label="显示样式"><Glyph n="cube" s={9} /></Quick><Drop aria-label="显示样式选项"><Caret /></Drop>
              <Quick aria-label="隐藏项目"><Eye size={8} color="#666" /></Quick><Drop aria-label="隐藏项目选项"><Caret /></Drop>
              <Quick aria-label="编辑外观"><Glyph n="ball" s={9} /></Quick>
              <Quick aria-label="应用布景"><Glyph n="scene" s={9} /></Quick><Drop aria-label="布景选项"><Caret /></Drop>
              <Quick aria-label="视图设定"><Monitor size={9} color="#777" /></Quick><Drop aria-label="视图设定选项"><Caret /></Drop>
            </Hud>
          </TabRow>
          <Body>
            <Panel>
              <Grip />
              <PanelTabs>
                <PanelTab $on aria-label="设计树"><Glyph n="asm" s={9} /></PanelTab>
                <PanelTab aria-label="属性"><Glyph n="list" s={9} /></PanelTab>
                <PanelTab aria-label="配置"><Glyph n="config" s={9} /></PanelTab>
                <PanelTab aria-label="尺寸专家"><Crosshair size={8} color="#333" /></PanelTab>
                <PanelTab aria-label="外观"><Glyph n="ball" s={9} /></PanelTab>
                <More aria-label="更多"><Chevron d={RIGHT} /></More>
              </PanelTabs>
              <FilterRow>
                <Filter size={9} color="#46606e" fill="#a9c6d3" /><Caret />
              </FilterRow>
              <TreeArea>
                <Tree>
                  <Node $root>
                    <Twist aria-label="折叠"><Caret /></Twist>
                    <Label $on><Glyph n="rootAsm" s={9} />(固定) _5006_SA01&lt;1&gt; (Defaul</Label>
                  </Node>
                  {nodes.map(([t, n], i) => (
                    <Node key={i}>
                      <Twist aria-label="展开"><svg width="3" height="4" viewBox="0 0 3 4"><path d="M0.500 0.500v3L2.600 2z" fill="#444" /></svg></Twist>
                      <Label><Glyph n={n} s={9} />{t}</Label>
                    </Node>
                  ))}
                </Tree>
                <VScroll><Chevron d={UP} /><i /><Chevron d={DOWN} /></VScroll>
              </TreeArea>
              <HScroll><Chevron d={LEFT} /><i /><Chevron d={RIGHT} /></HScroll>
            </Panel>
            <Viewport>
              <Scene />
              <Handle aria-label="折叠面板" />
            </Viewport>
          </Body>
        </Window>
      </Desktop>
    </>
  );
}
